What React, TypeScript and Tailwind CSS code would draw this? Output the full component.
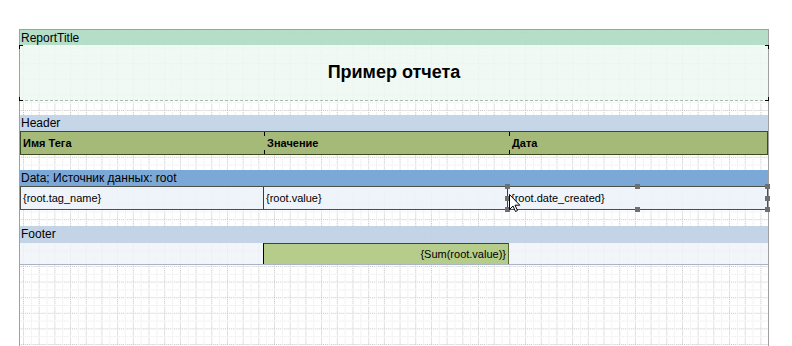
import React from "react";

const font = { fontFamily: '"Liberation Sans", Arial, sans-serif' };

function Grid() {
  return (
    <svg className="absolute inset-0 h-full w-full" xmlns="http://www.w3.org/2000/svg">
      <defs>
        <pattern id="g" x="3" y="2" width="15.69" height="15.6" patternUnits="userSpaceOnUse">
          <line x1="0.5" y1="0" x2="0.5" y2="15.6" stroke="#c4c4c4" strokeWidth="1" strokeDasharray="1 1" />
          <line x1="0" y1="0.5" x2="15.69" y2="0.5" stroke="#c4c4c4" strokeWidth="1" strokeDasharray="1 1" />
          <line x1="8.3" y1="0" x2="8.3" y2="15.6" stroke="#e6e6e6" strokeWidth="1" strokeDasharray="1 1" />
          <line x1="0" y1="8.3" x2="15.69" y2="8.3" stroke="#e6e6e6" strokeWidth="1" strokeDasharray="1 1" />
        </pattern>
      </defs>
      <rect width="100%" height="100%" fill="url(#g)" />
    </svg>
  );
}

function Handle({ className }: { className: string }) {
  return <div className={`absolute h-[5px] w-[5px] bg-[#6f6f6f] ${className}`} />;
}

function Bracket({ className }: { className: string }) {
  return <div className={`absolute h-[4px] w-[4px] border-black ${className}`} />;
}

export default function App() {
  return (
    <div className="h-[346px] w-[792px] overflow-hidden bg-white pl-[19px] pt-[29px]" style={font}>
      <div className="relative h-[340px] w-[750px] border-x border-t border-[#a0a0a0] bg-white">
        <Grid />
        <div className="relative flex flex-col">
          {/* ReportTitle band */}
          <div className="h-[15px] bg-[#b0dcc4]/95 pl-[1px] text-[12px] leading-[16px] text-black">ReportTitle</div>
          {/* Title area */}
          <div className="relative flex h-[56px] items-center justify-center border-b border-dashed border-[#a8bcae] bg-[#eef8f2]/85">
            <span className="text-[18px] font-bold text-black">Пример отчета</span>
            <Bracket className="left-[-1px] top-0 border-l border-t" />
            <Bracket className="bottom-[-1px] left-[-1px] border-b border-l" />
            <Bracket className="right-[-1px] top-0 border-r border-t" />
            <Bracket className="bottom-[-1px] right-[-1px] border-b border-r" />
          </div>
          <div className="h-[14px]" />
          {/* Header band */}
          <div className="h-[16px] bg-[#c3d4e8]/95 pl-[1px] text-[12px] leading-[17px] text-black">Header</div>
          <div className="flex h-[24px] border border-[#3e4b22] bg-[#a5b979] text-[11px] font-bold text-black">
            <div className="relative flex w-[243px] items-center pl-[2px]">Имя Тега</div>
            <div className="relative flex w-[245px] items-center pl-[3px]">
              <div className="absolute left-0 top-0 h-[4px] w-px bg-black" />
              <div className="absolute bottom-0 left-0 h-[4px] w-px bg-black" />
              Значение
            </div>
            <div className="relative flex flex-1 items-center pl-[3px]">
              <div className="absolute left-0 top-0 h-[4px] w-px bg-black" />
              <div className="absolute bottom-0 left-0 h-[4px] w-px bg-black" />
              Дата
            </div>
          </div>
          <div className="h-[15px]" />
          {/* Data band */}
          <div className="h-[16px] bg-[#7ca8d7] pl-[1px] text-[12px] leading-[17px] text-black">Data; Источник данных: root</div>
          <div className="flex h-[24px] border border-[#4a4f48] bg-[#edf3fa]/90 text-[11px] text-black">
            <div className="flex w-[243px] items-center border-r border-[#3a3a3a] pl-[2px]">{"{root.tag_name}"}</div>
            <div className="flex w-[244px] items-center border-r border-[#3a3a3a] pl-[2px]">{"{root.value}"}</div>
            <div className="relative flex flex-1 items-center pl-[3px]">
              {"{root.date_created}"}
              <Handle className="left-[-3px] top-[-3px]" />
              <Handle className="left-[127px] top-[-3px]" />
              <Handle className="right-[-3px] top-[-3px]" />
              <Handle className="left-[-3px] top-[9px]" />
              <Handle className="right-[-3px] top-[9px]" />
              <Handle className="bottom-[-3px] left-[-3px]" />
              <Handle className="bottom-[-3px] left-[127px]" />
              <Handle className="bottom-[-3px] right-[-3px]" />
              <svg className="absolute left-[1px] top-[7px]" width="12" height="19" viewBox="0 0 12 19">
                <path d="M0.5 0.5 L0.5 15.5 L4 12 L6.5 17.5 L8.5 16.5 L6 11.2 L10.8 11.2 Z" fill="white" stroke="black" strokeWidth="1" strokeLinejoin="round" />
              </svg>
            </div>
          </div>
          <div className="h-[16px]" />
          {/* Footer band */}
          <div className="h-[17px] bg-[#c1d2e6]/95 pl-[1px] text-[12px] leading-[17px] text-black">Footer</div>
          <div className="flex h-[22px] border-b border-[#a7b4c4] bg-[#eff4fa]/80 text-[11px] text-black">
            <div className="w-[243px]" />
            <div className="flex w-[246px] items-center justify-end border-l border-t border-r border-l-black border-t-[#3e4b22] border-r-[#55632f] bg-[#b5cc8b] pr-[2px]">
              {"{Sum(root.value)}"}
            </div>
            <div className="flex-1" />
          </div>
        </div>
      </div>
    </div>
  );
}
